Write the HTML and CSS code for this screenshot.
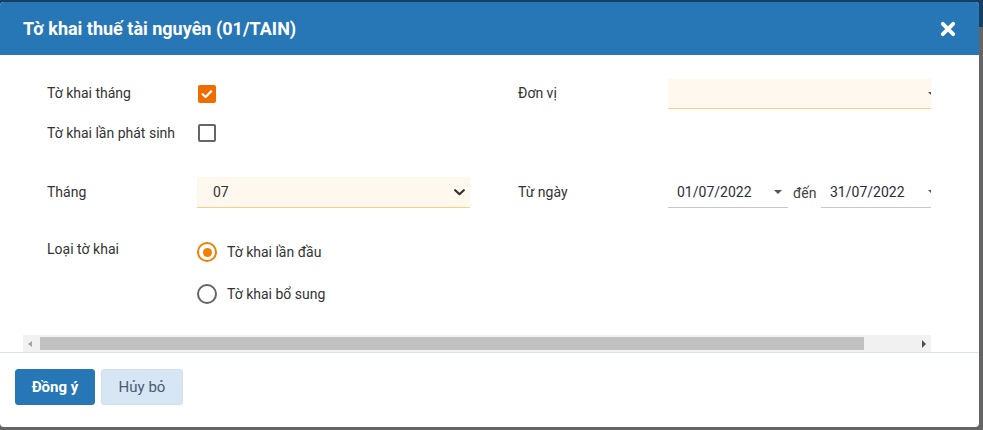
FILE: index.html
```html
<!DOCTYPE html>
<html lang="vi">
<head>
<meta charset="utf-8">
<title>Tờ khai thuế tài nguyên</title>
<link rel="stylesheet" href="styles.css">
</head>
<body>
<div class="modal">
  <div class="modal-header">
    <h1 class="modal-title">Tờ khai thuế tài nguyên (01/TAIN)</h1>
    <span class="close">
      <svg width="16" height="16" viewBox="0 0 16 16"><path d="M2.8 2.8 L13.2 13.2 M13.2 2.8 L2.8 13.2" stroke="#fff" stroke-width="3.8" stroke-linecap="round"/></svg>
    </span>
  </div>
  <div class="modal-body">
    <div class="scroll-area">
      <div class="form">
        <div class="row row-1">
          <div class="col">
            <span class="label">Tờ khai tháng</span>
            <span class="checkbox checked">
              <svg width="18" height="18" viewBox="0 0 18 18"><path d="M4.6 9.2 L7.6 12 L13.2 6.2" fill="none" stroke="#fff" stroke-width="2.2" stroke-linecap="round" stroke-linejoin="round"/></svg>
            </span>
          </div>
          <div class="col">
            <span class="label">Đơn vị</span>
            <div class="select select-wide"><span class="caret"></span></div>
          </div>
        </div>
        <div class="row row-2">
          <div class="col">
            <span class="label">Tờ khai lần phát sinh</span>
            <span class="checkbox"></span>
          </div>
        </div>
        <div class="row row-3">
          <div class="col">
            <span class="label">Tháng</span>
            <div class="select select-month">
              <span class="select-value">07</span>
              <svg class="chevron" width="11" height="7" viewBox="0 0 11 7"><path d="M1.2 1.2 L5.5 5.3 L9.8 1.2" fill="none" stroke="#333" stroke-width="2.2" stroke-linecap="round" stroke-linejoin="round"/></svg>
            </div>
          </div>
          <div class="col">
            <span class="label">Từ ngày</span>
            <div class="date date-from"><span class="date-value">01/07/2022</span><span class="caret"></span></div>
            <span class="to">đến</span>
            <div class="date date-to"><span class="date-value">31/07/2022</span><span class="caret"></span></div>
          </div>
        </div>
        <div class="row row-4">
          <div class="col col-top">
            <span class="label label-top">Loại tờ khai</span>
            <div class="radio-group">
              <div class="radio-item"><span class="radio checked"></span><span class="radio-text">Tờ khai lần đầu</span></div>
              <div class="radio-item"><span class="radio"></span><span class="radio-text">Tờ khai bổ sung</span></div>
            </div>
          </div>
        </div>
      </div>
    </div>
    <div class="scrollbar">
      <span class="sb-arrow sb-left"></span>
      <div class="sb-track"><div class="sb-thumb"></div></div>
      <span class="sb-arrow sb-right"></span>
    </div>
  </div>
  <div class="modal-footer">
    <button class="btn btn-primary">Đồng ý</button>
    <button class="btn btn-secondary">Hủy bỏ</button>
  </div>
</div>
</body>
</html>
```

FILE: styles.css
```css
* { box-sizing: border-box; }
html, body { margin: 0; padding: 0; }
body {
  width: 983px;
  height: 430px;
  overflow: hidden;
  font-family: Roboto, "Noto Sans", sans-serif;
  background: linear-gradient(to bottom, #173f66 0, #173f66 27px, #656565 27px);
  padding-top: 2px;
}
.modal {
  width: 979px;
  height: 425px;
  background: #fff;
  border-radius: 4px;
  overflow: hidden;
  display: flex;
  flex-direction: column;
}
.modal-header {
  height: 53px;
  flex: none;
  background: #2777b7;
  display: flex;
  align-items: center;
  justify-content: space-between;
  padding: 0 23px 0 23px;
}
.modal-title {
  margin: 0;
  color: #fff;
  font-size: 18px;
  font-weight: 700;
  line-height: 20px;
}
.close { display: flex; margin-top: 1px; }

.modal-body {
  height: 297px;
  flex: none;
  padding: 24px 48px 0 23px;
}
.scroll-area {
  width: 908px;
  height: 256px;
  overflow: hidden;
}
.form {
  width: 960px;
  padding-left: 24px;
  color: #333;
  font-size: 14px;
}
.row { display: flex; }
.col {
  width: 471px;
  flex: none;
  display: flex;
  align-items: center;
}
.row-1 { height: 30px; }
.row-2 { height: 30px; margin-top: 9px; }
.row-3 { height: 31px; margin-top: 29px; }
.row-4 { height: 64px; margin-top: 32px; }
.col-top { align-items: flex-start; }
.label {
  width: 150px;
  flex: none;
  line-height: 18px;
}
.row-1 .label, .row-3 .label { margin-top: -2px; }

.checkbox {
  width: 18px;
  height: 18px;
  margin-left: 1px;
  border: 2px solid #666;
  border-radius: 2px;
  display: flex;
}
.checkbox.checked {
  background: #ef6c00;
  border: none;
}

.select {
  position: relative;
  height: 30px;
  background: #fef8ee;
  border-bottom: 1px solid #f8cf83;
  display: flex;
  align-items: center;
}
.select-wide { width: 274px; }
.select-month {
  width: 273px;
  height: 31px;
  padding: 0 5px 0 16px;
  justify-content: space-between;
}
.chevron { margin-top: 1px; }
.caret {
  width: 0;
  height: 0;
  border-left: 4.5px solid transparent;
  border-right: 4.5px solid transparent;
  border-top: 4.5px solid #555;
}
.select-wide .caret { position: absolute; right: 6px; top: 13px; }

.date {
  height: 31px;
  border-bottom: 1px solid #c8c8c8;
  display: flex;
  align-items: center;
  justify-content: space-between;
  padding: 0 6px 0 9px;
}
.date-from { width: 120px; }
.date-to { width: 121px; }
.date-value { color: #2d2d3a; }
.to { margin: 0 5px 0 5px; width: 23px; color: #444; }

.radio-group {
  margin-top: 2px;
  display: flex;
  flex-direction: column;
  gap: 22px;
}
.radio-item {
  display: flex;
  align-items: center;
  height: 20px;
}
.radio {
  width: 20px;
  height: 20px;
  border-radius: 50%;
  border: 2px solid #666;
  display: flex;
  align-items: center;
  justify-content: center;
}
.radio.checked { border: 2.5px solid #f27f05; }
.radio.checked::after {
  content: "";
  width: 9px;
  height: 9px;
  border-radius: 50%;
  background: #f27f05;
}
.radio-text { margin-left: 10px; }

.scrollbar {
  width: 908px;
  height: 17px;
  background: #f1f1f1;
  display: flex;
  align-items: center;
  padding: 0 5px;
}
.sb-arrow { width: 0; height: 0; flex: none; }
.sb-left {
  border-top: 3.5px solid transparent;
  border-bottom: 3.5px solid transparent;
  border-right: 4px solid #a3a3a3;
}
.sb-right {
  border-top: 4px solid transparent;
  border-bottom: 4px solid transparent;
  border-left: 4.5px solid #505050;
}
.sb-track { flex: 1; padding: 0 58px 0 8px; }
.sb-thumb { height: 13px; background: #c1c1c1; }

.modal-footer {
  flex: 1;
  border-top: 1px solid #dde2e9;
  padding: 16px 15px 0;
  display: flex;
  gap: 6px;
  align-items: flex-start;
}
.btn {
  height: 36px;
  border-radius: 3px;
  font-family: Roboto, "Noto Sans", sans-serif;
  font-size: 15px;
  padding: 0;
  white-space: nowrap;
  cursor: pointer;
}
.btn-primary {
  width: 80px;
  background: #2777b7;
  border: 1px solid #2777b7;
  color: #fff;
  font-weight: 700;
}
.btn-secondary {
  width: 82px;
  background: #d6e6f4;
  border: 1px solid #d3e0ec;
  color: #4a5b73;
}
```
